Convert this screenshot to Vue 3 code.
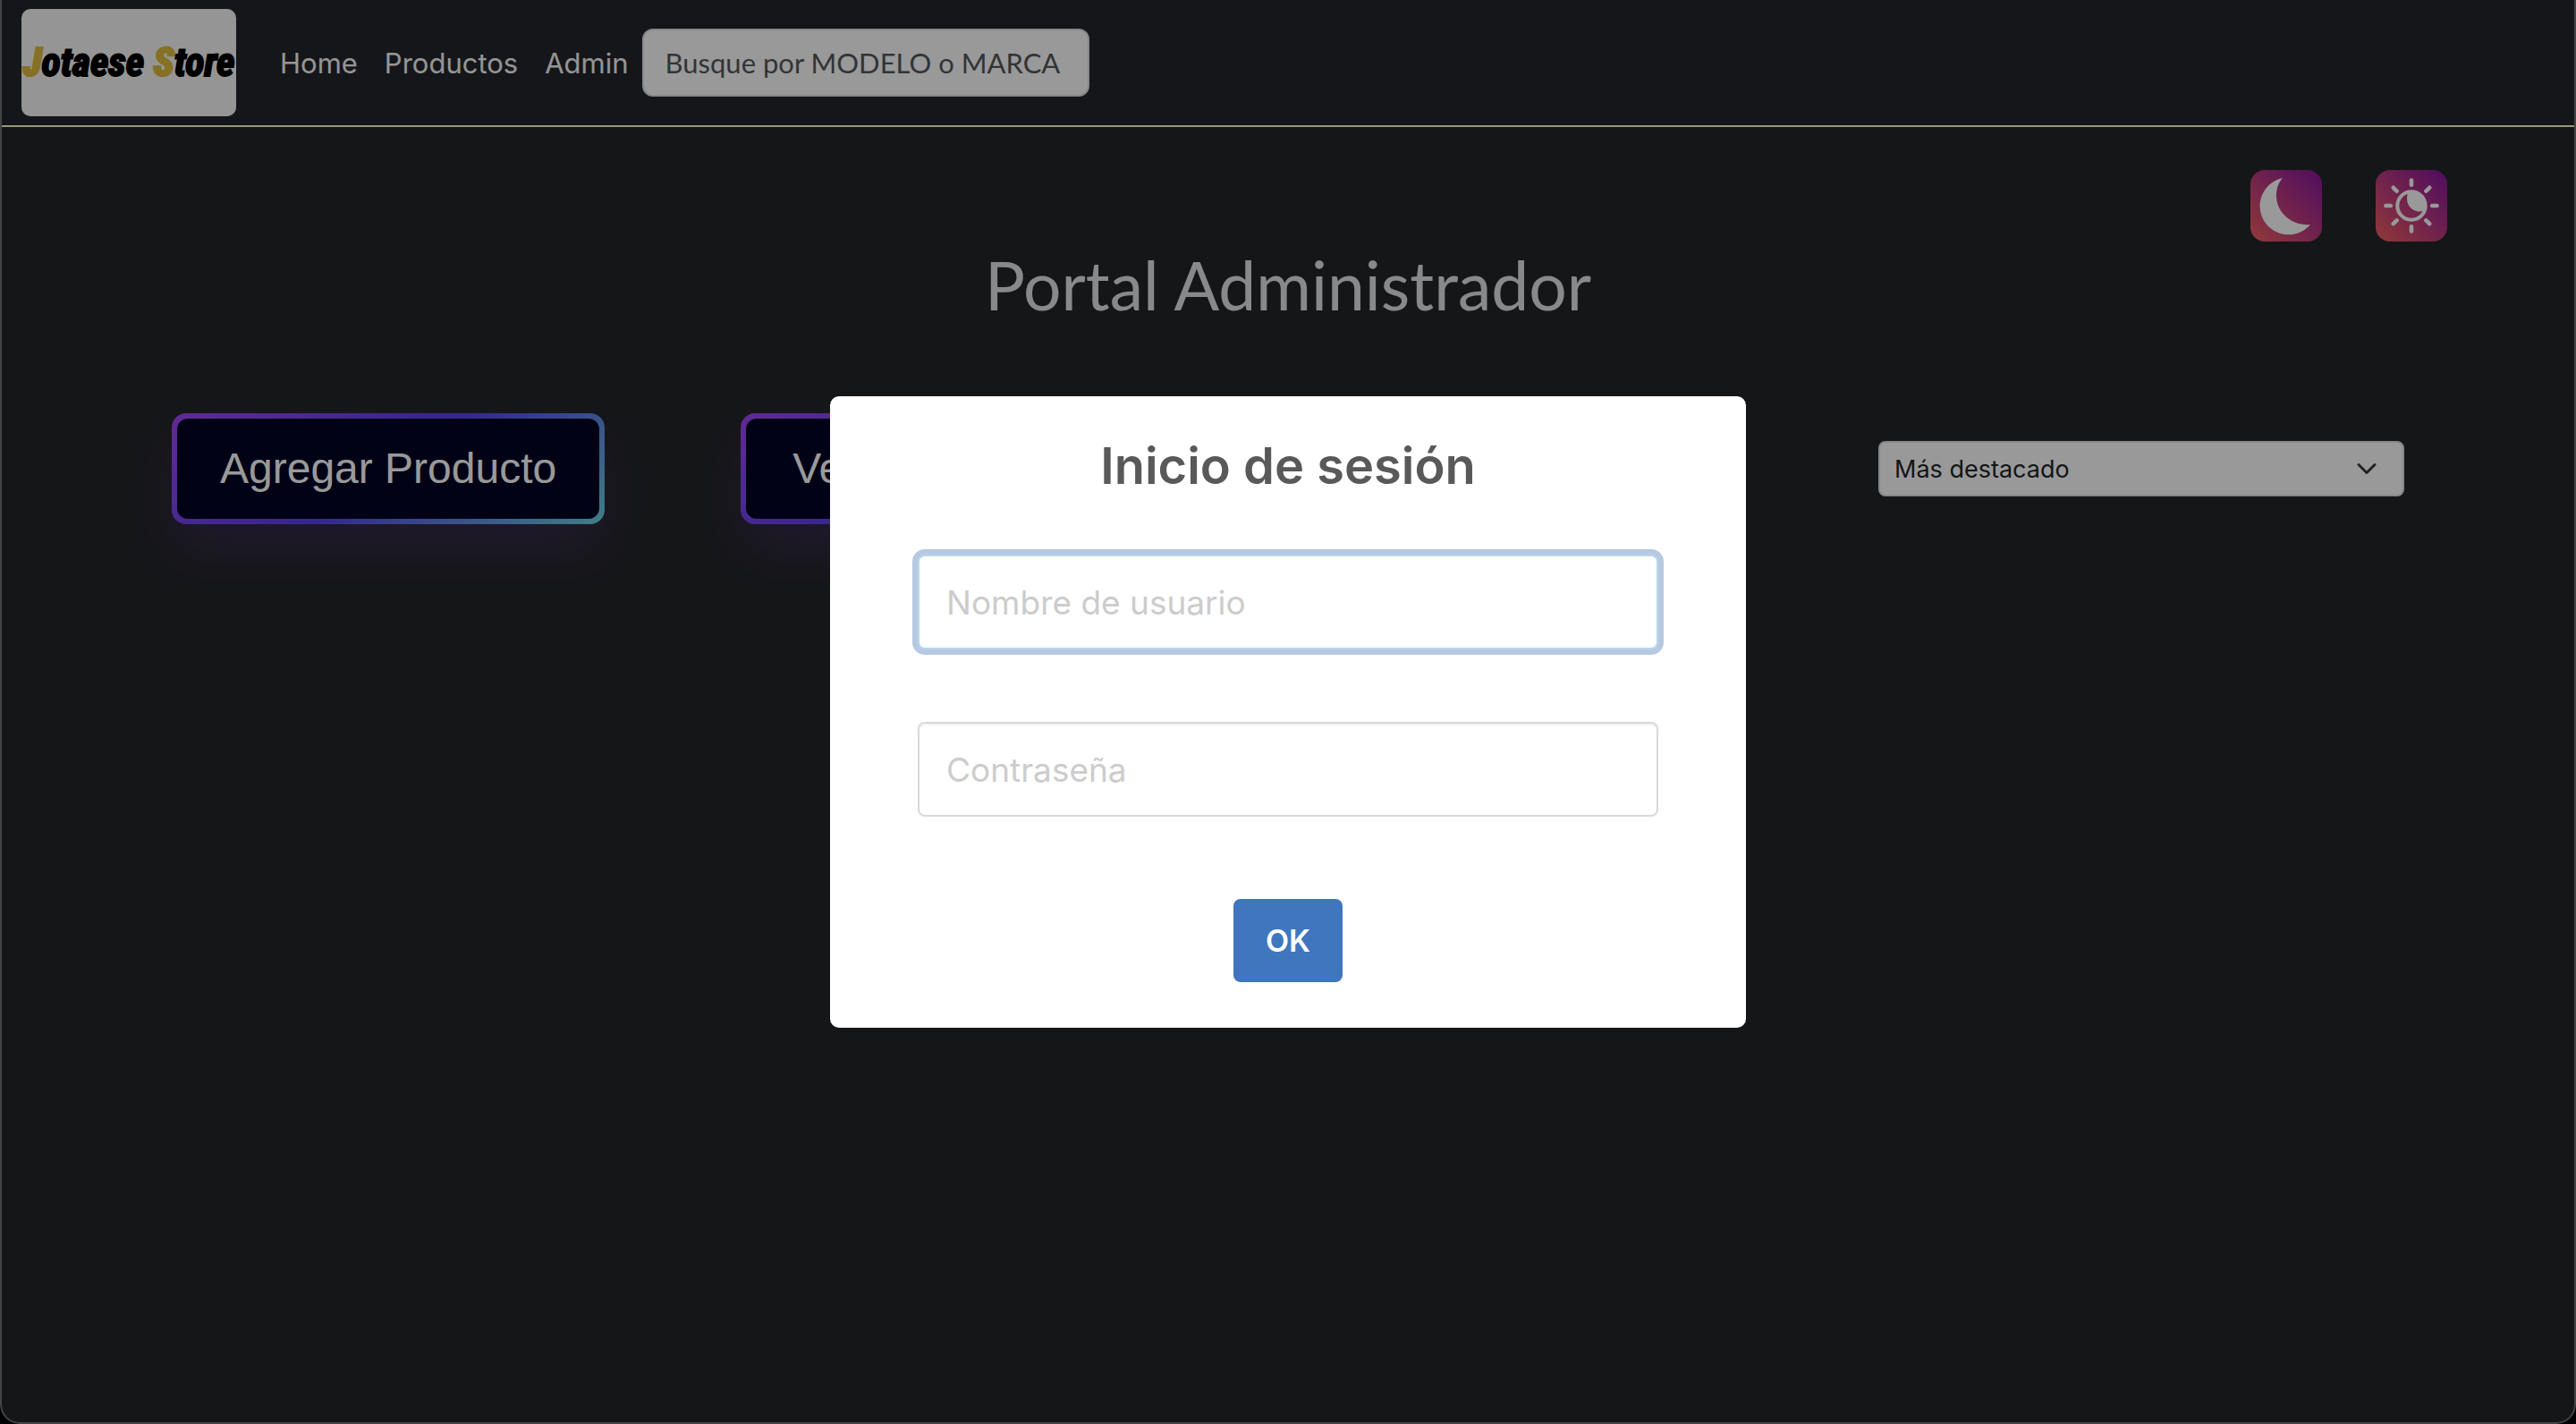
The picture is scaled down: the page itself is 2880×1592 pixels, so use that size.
<script setup>
import { ref } from 'vue'

const links = ['Home', 'Productos', 'Admin']
const search = ref('')
const order = ref('Más destacado')
const username = ref('')
const password = ref('')
</script>

<template>
  <div class="page">
    <header class="navbar">
      <a class="logo" href="#" aria-label="Jotaese Store">
        <span><b>J</b>otaese <b>S</b>tore</span>
      </a>
      <nav class="links">
        <a v-for="link in links" :key="link" href="#">{{ link }}</a>
      </nav>
      <input v-model="search" class="search" type="text" aria-label="Buscar" placeholder="Busque por MODELO o MARCA" />
    </header>

    <main>
      <div class="themes">
        <button type="button" aria-label="Modo oscuro">
          <svg viewBox="0 0 80 80"><path fill="#fff" d="M36 9A32 32 0 1 0 67 61C46 63 29 47 29 29C29 21 31 15 36 9Z" /></svg>
        </button>
        <button type="button" aria-label="Modo claro">
          <svg viewBox="0 0 80 80" fill="none" stroke="#fff">
            <circle cx="40" cy="40" r="15.7" stroke-width="4" />
            <path fill="#fff" stroke="none" d="M36 26C32 38 41 49 53 46L57 40L53 28L40 23Z" />
            <path
              stroke-width="4.6"
              stroke-linecap="round"
              d="M40 11.5V16.8M40 63.2V68.5M11.5 40H16.8M63.2 40H68.5M19.8 19.8L23.6 23.6M56.4 56.4L60.2 60.2M19.8 60.2L23.6 56.4M56.4 23.6L60.2 19.8"
            />
          </svg>
        </button>
      </div>

      <h1>Portal Administrador</h1>

      <div class="tools">
        <button class="glow" type="button"><span>Agregar Producto</span></button>
        <button class="glow" type="button"><span>Ver Productos</span></button>
        <select v-model="order" aria-label="Ordenar">
          <option>Más destacado</option>
        </select>
      </div>
    </main>

    <div class="backdrop">
      <form class="dialog" role="dialog" aria-labelledby="dialog-title" @submit.prevent>
        <h2 id="dialog-title">Inicio de sesión</h2>
        <input v-model="username" class="active" type="text" aria-label="Nombre de usuario" placeholder="Nombre de usuario" />
        <input v-model="password" type="password" aria-label="Contraseña" placeholder="Contraseña" />
        <button type="submit">OK</button>
      </form>
    </div>
  </div>
</template>

<style>
body {
  margin: 0;
  background: #000;
}
</style>

<style scoped>
* {
  box-sizing: border-box;
}

.page {
  position: relative;
  min-height: 100vh;
  overflow: hidden;
  border-radius: 0 0 22px 22px;
  background: #232629;
  color: #fff;
  font-family: Inter, "Liberation Sans", sans-serif;
}

/* window edge */
.page::after {
  content: "";
  position: absolute;
  inset: 0;
  border: 2px solid #444546;
  border-top: 0;
  border-radius: 0 0 22px 22px;
  pointer-events: none;
}

.navbar {
  display: flex;
  align-items: center;
  height: 142px;
  padding: 0 24px;
  border-bottom: 2px solid #fdfdd0;
  background: #24262b;
}

.logo {
  display: flex;
  align-items: center;
  justify-content: center;
  width: 240px;
  height: 120px;
  border-radius: 10px;
  background: #f8f8f8;
  color: #000;
  font: italic bold 44px "Roboto Condensed", "Liberation Sans Narrow", sans-serif;
  -webkit-text-stroke: 2px currentColor;
  text-decoration: none;
  white-space: nowrap;
}

.logo b {
  color: #dfbb3c;
}

.links {
  display: flex;
  margin-left: 34px;
}

.links a {
  padding: 0 15px;
  color: #f8f8f8;
  font-size: 31px;
  text-decoration: none;
}

.search {
  width: 500px;
  height: 76px;
  padding: 0 24px;
  border: 2px solid #dee2e6;
  border-radius: 12px;
  background: #fff;
  font: 31px Lato, sans-serif;
}

.search::placeholder {
  color: #55585b;
}

.themes {
  display: flex;
  justify-content: flex-end;
  gap: 60px;
  padding: 48px 144px 0;
}

.themes button {
  width: 80px;
  height: 80px;
  padding: 0;
  border: 0;
  border-radius: 16px;
  background: linear-gradient(45deg, #f15f61, #85159f);
}

.themes svg {
  display: block;
}

h1 {
  margin: 0;
  color: #e3e4e8;
  font: 75px/96px Lato, sans-serif;
  text-align: center;
}

.tools {
  display: grid;
  grid-template-columns: repeat(4, 1fr);
  align-items: center;
  justify-items: start;
  gap: 48px;
  margin-top: 96px;
  padding: 0 192px;
}

.glow {
  min-width: 418px;
  padding: 6px;
  border: 0;
  border-radius: 16px;
  background: linear-gradient(144deg, #a048f3, #5841ed 50%, #67d5df);
  box-shadow: 0 30px 60px rgba(151, 65, 252, 0.15);
  color: #fff;
  font: 48px/56px "Liberation Sans", sans-serif;
  white-space: nowrap;
}

.glow span {
  display: block;
  padding: 28px 48px;
  border-radius: 12px;
  background: #040425;
}

select {
  grid-column: 4;
  width: 100%;
  height: 62px;
  padding: 0 16px;
  border: 2px solid #dee2e6;
  border-radius: 8px;
  background: #fff url("data:image/svg+xml,%3Csvg xmlns='http://www.w3.org/2000/svg' viewBox='0 0 16 16'%3E%3Cpath fill='none' stroke='%23343a40' stroke-linecap='round' stroke-linejoin='round' stroke-width='2' d='m2 5 6 6 6-6'/%3E%3C/svg%3E") no-repeat right 26px center / 28px 24px;
  color: #212529;
  font: 27px Inter, sans-serif;
  appearance: none;
}

.backdrop {
  position: absolute;
  inset: 0;
  display: grid;
  place-items: center;
  background: rgba(0, 0, 0, 0.4);
}

.dialog {
  display: flex;
  flex-direction: column;
  align-items: center;
  width: 1024px;
  padding: 40px 98px 51px;
  border-radius: 10px;
  background: #fff;
}

h2 {
  margin: 0 0 61px;
  color: #595959;
  font-size: 56px;
  font-weight: 600;
  line-height: 76px;
}

.dialog input {
  width: 100%;
  height: 106px;
  margin-bottom: 81px;
  padding: 0 30px;
  border: 2px solid #d9d9d9;
  border-radius: 8px;
  box-shadow: inset 0 2px 2px rgba(0, 0, 0, 0.06);
  color: #545454;
  font: 37px Inter, sans-serif;
}

.dialog input::placeholder {
  color: #ccc;
}

.dialog .active {
  border-color: #b9d8ea;
  box-shadow: 0 0 0 6px #b7c9e2;
}

.dialog button {
  width: 122px;
  height: 93px;
  margin-top: 11px;
  border: 0;
  border-radius: 8px;
  background: #4076be;
  color: #fff;
  font: 600 34px Inter, sans-serif;
}
</style>
